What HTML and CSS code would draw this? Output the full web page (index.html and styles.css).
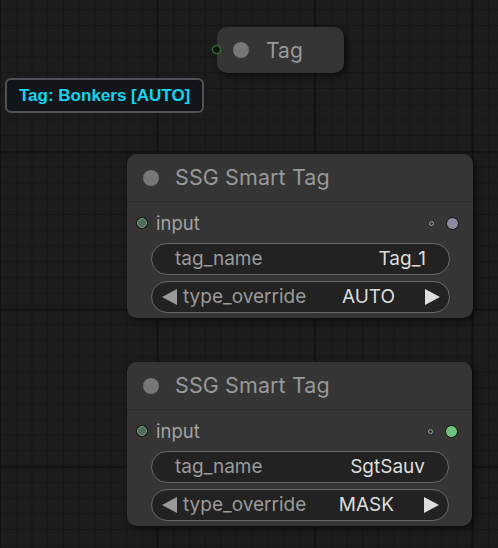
FILE: index.html
```html
<!DOCTYPE html>
<html>
<head>
<meta charset="utf-8">
<link rel="stylesheet" href="styles.css">
</head>
<body>
<div class="canvas">
  <div class="collapsed-node">
    <span class="collapsed-in"></span>
    <span class="title-dot"></span>
    <span class="title-text">Tag</span>
  </div>

  <div class="tag-label">Tag: Bonkers [AUTO]</div>

  <div class="node node-a">
    <div class="node-title"><span class="title-dot"></span><span class="title-text">SSG Smart Tag</span></div>
    <div class="node-body">
      <div class="slot-row">
        <span class="slot-in"></span>
        <span class="slot-label">input</span>
        <span class="slot-mini"></span>
        <span class="slot-out slot-out-gray"></span>
      </div>
      <div class="widget">
        <span class="w-label">tag_name</span>
        <span class="w-value">Tag_1</span>
      </div>
      <div class="widget combo">
        <svg class="arrow arrow-left" viewBox="0 0 15 16"><polygon points="15,0 15,16 0,8"/></svg>
        <span class="w-label">type_override</span>
        <span class="w-value">AUTO</span>
        <svg class="arrow arrow-right" viewBox="0 0 15 16"><polygon points="0,0 0,16 15,8"/></svg>
      </div>
    </div>
  </div>

  <div class="node node-b">
    <div class="node-title"><span class="title-dot"></span><span class="title-text">SSG Smart Tag</span></div>
    <div class="node-body">
      <div class="slot-row">
        <span class="slot-in"></span>
        <span class="slot-label">input</span>
        <span class="slot-mini"></span>
        <span class="slot-out slot-out-green"></span>
      </div>
      <div class="widget">
        <span class="w-label">tag_name</span>
        <span class="w-value">SgtSauv</span>
      </div>
      <div class="widget combo">
        <svg class="arrow arrow-left" viewBox="0 0 15 16"><polygon points="15,0 15,16 0,8"/></svg>
        <span class="w-label">type_override</span>
        <span class="w-value">MASK</span>
        <svg class="arrow arrow-right" viewBox="0 0 15 16"><polygon points="0,0 0,16 15,8"/></svg>
      </div>
    </div>
  </div>
</div>
</body>
</html>
```

FILE: styles.css
```css
html, body {
  margin: 0;
  padding: 0;
}

body {
  width: 498px;
  height: 548px;
  overflow: hidden;
  font-family: Inter, "Noto Sans", sans-serif;
}

.canvas {
  position: relative;
  width: 498px;
  height: 548px;
  background-color: #1c1c1c;
  background-image:
    linear-gradient(90deg, #131313 0, #131313 2px, transparent 2px),
    linear-gradient(0deg, transparent calc(100% - 2px), #131313 calc(100% - 2px)),
    linear-gradient(90deg, #161616 0, #161616 1px, transparent 1px),
    linear-gradient(0deg, transparent calc(100% - 1px), #161616 calc(100% - 1px));
  background-size: 157.5px 157.5px, 157.5px 157.5px, 15.75px 15.75px, 15.75px 15.75px;
  background-position: -1px 0, 0 -6px, 0 0, 0 -6.5px;
}

/* ---------- collapsed node ---------- */
.collapsed-node {
  position: absolute;
  left: 217px;
  top: 27px;
  width: 127px;
  height: 46px;
  box-sizing: border-box;
  background: #353535;
  border-radius: 10px;
  box-shadow: 3px 3px 6px rgba(0, 0, 0, 0.55);
  display: flex;
  align-items: center;
  padding-left: 16px;
}

.collapsed-in {
  position: absolute;
  left: -5px;
  top: 18px;
  width: 7px;
  height: 7px;
  border-radius: 50%;
  background: #101010;
  border: 1.5px solid #2f8a38;
  box-shadow: 0 0 2px rgba(60, 160, 60, 0.5);
}

.title-dot {
  width: 16px;
  height: 16px;
  border-radius: 50%;
  background: #777777;
  flex: none;
}

.title-text {
  color: #999999;
  font-size: 21px;
  margin-left: 17px;
  line-height: 1;
  letter-spacing: 0.1px;
}

/* ---------- label ---------- */
.tag-label {
  position: absolute;
  left: 5px;
  top: 78px;
  width: 199px;
  height: 35px;
  box-sizing: border-box;
  border: 2px solid #4f5357;
  border-radius: 6px;
  background: #11151a;
  color: #12d6f0;
  font-family: "Liberation Sans", Arial, sans-serif;
  font-weight: bold;
  font-size: 17px;
  display: flex;
  align-items: center;
  padding-left: 12px;
  padding-top: 1px;
}

/* ---------- nodes ---------- */
.node {
  position: absolute;
  left: 127px;
  width: 346px;
  background: #353535;
  border-radius: 10px;
  box-shadow: 3px 3px 7px rgba(0, 0, 0, 0.55);
}

.node-a { top: 154px; }
.node-b { top: 362px; width: 345px; }

.node-title {
  height: 47px;
  border-bottom: 1px solid #2c2c2c;
  display: flex;
  align-items: center;
  padding-left: 16px;
  background: #353535;
  border-radius: 10px 10px 0 0;
}

.node-title .title-text {
  margin-left: 16px;
  font-size: 21.5px;
}

.node-body {
  padding: 0 23px 5px 24px;
  display: flex;
  flex-direction: column;
}

.slot-row {
  height: 40px;
  margin: 0 -16px 0 -24px;
  display: flex;
  align-items: center;
  padding-left: 10px;
  padding-right: 7px;
  padding-top: 1px;
}

.slot-in {
  width: 8px;
  height: 8px;
  border-radius: 50%;
  background: #4d6a5a;
  border: 1.5px solid #7fa68a;
  box-shadow: 0 0 0 1px #151515;
  flex: none;
}

.slot-label {
  color: #a3a3a3;
  font-size: 18.5px;
  margin-left: 9px;
  flex: 1;
  padding-bottom: 1px;
}

.slot-mini {
  width: 3px;
  height: 3px;
  border-radius: 50%;
  border: 1px solid #a0a0a0;
  flex: none;
  margin-right: 12px;
}

.slot-out {
  width: 11px;
  height: 11px;
  border-radius: 50%;
  border: 1.5px solid #111111;
  flex: none;
}

.slot-out-gray { background: #8b8a9e; }
.slot-out-green { background: #71c27c; }

.widget {
  height: 32px;
  box-sizing: border-box;
  border: 1px solid #6a6a6a;
  border-radius: 16px;
  background: #222222;
  display: flex;
  align-items: center;
  padding: 0 23px 1px 23px;
  font-size: 19px;
}

.widget + .widget {
  margin-top: 6px;
}

.w-label {
  color: #9a9a9a;
  flex: 1;
}

.w-value {
  color: #dddddd;
}

.combo {
  padding: 0 9px 1px 10px;
}

.combo .w-label {
  margin-left: 6px;
}

.combo .w-value {
  margin-right: 30px;
}

.arrow {
  width: 15px;
  height: 16px;
  flex: none;
}

.arrow-left { fill: #9a9a9a; }
.arrow-right { fill: #dddddd; }
```
